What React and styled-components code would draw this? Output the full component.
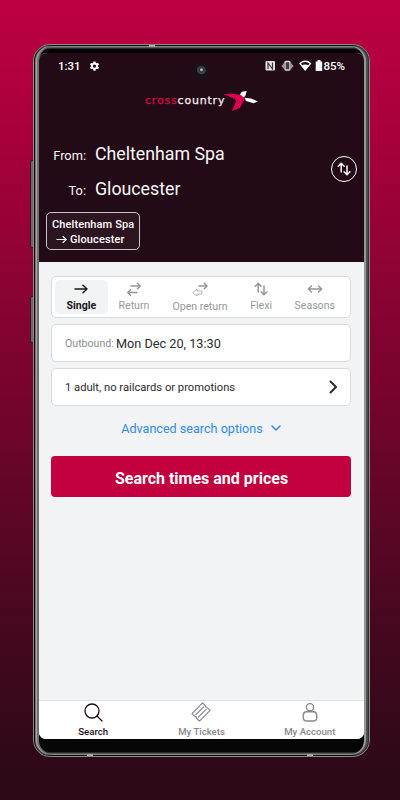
import React from "react";
import styled, { createGlobalStyle } from "styled-components";

const GlobalStyle = createGlobalStyle`
    * {
        box-sizing: border-box;
    }
    body {
        margin: 0;
        font-family: Roboto, sans-serif;
    }
`;

const Page = styled.div`
    width: 400px;
    height: 800px;
    padding: 44px 30px 0 33px;
    overflow: hidden;
    background: linear-gradient(#bd0041 0, #a8003d 17%, #75042d 50%, #43081f 80%, #290817 100%);
`;

const Phone = styled.div`
    position: relative;
    width: 337px;
    height: 713px;
    padding: 8px 6px 18px;
    border-radius: 17px;
    border: 1px solid #8b8a85;
    background: #050505;
    box-shadow: inset 0 0 0 1px #0c0c0c, inset 0 0 0 2px #858585, inset 0 0 0 3px #5a595a,
        inset 0 0 0 4px #2a292a;
`;

const Rails = styled.div`
    position: absolute;
    top: 1px;
    bottom: 1px;
    left: 0;
    right: 0;
    border-radius: 15px;
    box-shadow: inset 1px 0 #080808, inset 2px 0 #777476, inset 3px 0 #aaa6a8, inset 5px 0 #716d70,
        inset -1px 0 #303030, inset -2px 0 #4c4c4c, inset -3px 0 #555, inset -5px 0 #969696;
`;

const SideKey = styled.div`
    position: absolute;
    left: -4px;
    top: ${props => props.top}px;
    width: 3px;
    height: ${props => props.size}px;
    border: 1px solid #2c1b20;
    border-right: 0;
    border-radius: 2px 0 0 2px;
    background: #7c5f69;
`;

const Antenna = styled.div`
    position: absolute;
    left: ${props => props.left}px;
    ${props => (props.bottom ? "bottom: 0;" : "top: 0;")}
    width: 6px;
    height: 2px;
    background: #aaa;
`;

const Screen = styled.div`
    position: relative;
    display: flex;
    flex-direction: column;
    width: 325px;
    height: 686px;
    margin-left: -1px;
    border-radius: 7px;
    overflow: hidden;
    background: #f2f3f5;
`;

const Header = styled.header`
    height: 209px;
    background: #220b16;
    color: #fff;
`;

const StatusBar = styled.div`
    display: flex;
    align-items: center;
    height: 26px;
    padding: 0 19px 0 19px;
    font-size: 11.5px;
    font-weight: 500;

    svg {
        display: block;
    }
`;

const StatusIcons = styled.div`
    display: flex;
    align-items: center;
    margin-left: auto;
`;

const Camera = styled.div`
    position: absolute;
    left: 154px;
    top: 10px;
    width: 16px;
    height: 16px;
    border-radius: 50%;
    border: 3px solid #17131a;
    background: radial-gradient(circle at 55% 38%, #b8bac4 0 0.8px, #32323e 2px, #45454f 4px, #111 5px);
`;

const Brand = styled.div`
    display: flex;
    align-items: center;
    height: 30px;
    margin-top: 7px;
    padding-left: 106px;
`;

const BrandName = styled.div`
    width: 79px;
    white-space: nowrap;
    font: 11px/14px "DejaVu Sans", sans-serif;
    letter-spacing: 0.8px;
    color: #f5eef1;
    -webkit-text-stroke: 0.25px;

    span {
        color: #dc0049;
    }
`;

const Route = styled.div`
    display: flex;
    align-items: center;
    justify-content: space-between;
    height: 70px;
    margin-top: 20px;
    padding-right: 7px;
`;

const Stop = styled.div`
    display: grid;
    grid-template-columns: 47px 1fr;
    column-gap: 9px;
    align-items: baseline;
    height: 35px;
    line-height: 37px;
    font-size: 17.75px;
    color: #fbf8f9;
`;

const StopLabel = styled.span`
    text-align: right;
    font-size: 12.8px;
    line-height: 20px;
`;

const SwapButton = styled.button`
    display: flex;
    align-items: center;
    justify-content: center;
    width: 26px;
    height: 26px;
    padding: 0;
    margin-top: -4px;
    border: 1.5px solid #fff;
    border-radius: 50%;
    background: none;
    color: #fff;
`;

const Recent = styled.div`
    width: 94px;
    height: 38px;
    margin: 6px 0 0 7px;
    padding: 4px 5px;
    border: 1px solid #cbc5c8;
    border-radius: 5px;
    background: #2d1421;
    font-size: 11px;
    font-weight: 500;
    line-height: 15px;
    letter-spacing: 0.1px;
    white-space: nowrap;

    div {
        display: flex;
        align-items: center;
        gap: 3px;
        padding-left: 4px;
    }
`;

const Body = styled.main`
    flex: 1;
    padding: 14px 13px 0 12px;
`;

const Card = styled.div`
    display: flex;
    align-items: center;
    height: 38px;
    margin-bottom: 6px;
    padding: 0 13px;
    border: 1px solid #d9dadc;
    border-radius: 5px;
    background: #fff;
    font-size: ${props => props.size || 11.2}px;
    color: #2c2b2d;
`;

const TicketTypes = styled(Card)`
    height: 42px;
    padding: 3px;
`;

const TicketType = styled.div`
    display: flex;
    flex-direction: column;
    align-items: center;
    width: ${props => props.width}px;
    height: 34px;
    padding-top: 2px;
    border-radius: 5px;
    background: ${props => (props.active ? "#f2f3f5" : "none")};
    color: ${props => (props.active ? "#18171a" : "#96979a")};
    font-size: 10.6px;
    font-weight: ${props => (props.active ? 700 : 400)};
    line-height: 14px;
    white-space: nowrap;

    svg {
        margin-bottom: ${props => (props.low ? 4 : 3)}px;
    }
`;

const Muted = styled.span`
    width: 51px;
    font-size: 10.6px;
    color: #8b8c8f;
`;

const Advanced = styled.div`
    display: flex;
    align-items: center;
    justify-content: center;
    gap: 8px;
    height: 32px;
    font-size: 12.6px;
    color: #2f8be9;
`;

const SearchButton = styled.button`
    display: block;
    width: 100%;
    height: 41px;
    margin-top: 12px;
    padding: 3px 0 0 1px;
    border: 0;
    border-radius: 4px;
    background: #c3003e;
    color: #fff;
    font: 700 16px Roboto, sans-serif;
`;

const TabBar = styled.nav`
    display: grid;
    grid-template-columns: repeat(3, 1fr);
    height: 39px;
    border-top: 1px solid #dedfe1;
    background: #fff;
`;

const Tab = styled.div`
    display: flex;
    flex-direction: column;
    align-items: center;
    gap: 1px;
    padding-top: 1px;
    font-size: 9.6px;
    font-weight: 500;
    line-height: 18px;
    color: ${props => (props.active ? "#220b16" : "#87888c")};
`;

const Gap = styled.span`
    width: 8px;
`;

const Spacer = styled.span`
    flex: 1;
`;

const Icon = ({ width, height, box, stroke = 1.5, children }) => (
    <svg
        width={width}
        height={height}
        viewBox={box || `0 0 ${width} ${height}`}
        fill="none"
        stroke="currentColor"
        strokeWidth={stroke}
        strokeLinecap="round"
        strokeLinejoin="round"
    >
        {children}
    </svg>
);

const ArrowRight = ({ width = 14 }) => (
    <Icon width={width} height={width} box="0 0 14 14">
        <path d="M1 7h12M9 3.2 13 7l-4 3.8" />
    </Icon>
);

const UpDown = () => (
    <Icon width={14} height={14}>
        <path d="M4.2 10V1.5M1.3 4.2l2.9-2.9 2.9 2.9M10 4v8.5M7.1 9.8l2.9 2.9 2.9-2.9" />
    </Icon>
);

const ReturnArrows = () => (
    <Icon width={14} height={14}>
        <path d="M4 4h9M10.5 1.3l2.7 2.7-2.7 2.7M10 10.5H1M3.5 7.8.8 10.5l2.7 2.7" />
    </Icon>
);

const OpenReturnArrows = () => (
    <Icon width={16} height={14}>
        <path d="M7 4h8M12.3 1.2 15 4l-2.7 2.8" />
        <path strokeWidth="0.7" d="M1 10.5 5 7v2h5v3H5v2z" />
    </Icon>
);

const BothWays = () => (
    <Icon width={16} height={14}>
        <path d="M1.5 7h13M4.5 4 1.3 7l3.2 3M11.5 4l3.2 3-3.2 3" />
    </Icon>
);

const Gear = () => (
    <svg width="11" height="11" viewBox="0 0 24 24" fill="#fff" stroke="none">
        <path
            fillRule="evenodd"
            d="M9.8 1h4.4l.6 3 2 1.1 2.9-1 2.2 3.8-2.3 2v2.2l2.3 2-2.2 3.8-2.9-1-2 1.1-.6 3H9.8l-.6-3-2-1.1-2.9 1-2.2-3.8 2.3-2V9.9l-2.3-2 2.2-3.8 2.9 1 2-1.1zM12 7.5a3.5 3.5 0 1 0 0 7 3.5 3.5 0 0 0 0-7z"
        />
    </svg>
);

const PhoneStatus = () => (
    <StatusIcons>
        <svg width="58" height="12" viewBox="0 0 58 12">
            <rect x="0.5" y="1" width="9.5" height="9.5" rx="1" fill="#e7e1e4" />
            <path d="M3 9V3l4.5 6V2.5" stroke="#423239" strokeWidth="1.2" fill="none" />
            <rect x="20" y="1.5" width="5" height="8.5" rx="1" fill="#493b42" stroke="#ddd6da" strokeWidth="1.4" />
            <path d="M18.3 3.5v5M26.7 3.5v5M17.3 5v2M27.7 5v2" stroke="#b9b0b5" />
            <path d="M35 3.5c3-3 7.5-3 10.5 0L40.2 10z" fill="none" stroke="#fff" strokeWidth="1.3" />
            <path d="M36.5 5.5c2.5-1.5 5-1.5 7.5 0L40.2 10z" fill="#fff" />
            <path d="M52.5 0h3v1.5H57.200V11h-6.500V1.500h1.800z" fill="#fff" />
        </svg>
        85%
    </StatusIcons>
);

const BrandMark = () => (
    <svg width="34" height="20" viewBox="0 0 34 20">
        <path d="M0 3.300 6 2.500 16 3.800l5 3-5 10.200L8 20l4-9.500-1-2.500z" fill="#de004d" />
        <path d="M16 3.500 17.800.8 22.700 0l-1.500 5.200-1.700 1z" fill="#fff" />
        <path d="m20.500 6.800 6.500.6 7 3-4.500 1.800-7.500-2.200z" fill="#fff" />
    </svg>
);

const App = () => (
    <Page>
        <GlobalStyle />
        <Phone>
            <SideKey top={115} size={88} />
            <SideKey top={251} size={47} />
            <Rails />
            <Antenna left={115} />
            <Antenna left={53} bottom />
            <Antenna left={273} bottom />
            <Screen>
                <Header>
                    <StatusBar>
                        1:31
                        <Gap />
                        <Gear />
                        <PhoneStatus />
                    </StatusBar>
                    <Camera />
                    <Brand>
                        <BrandName>
                            <span>cross</span>country
                        </BrandName>
                        <BrandMark />
                    </Brand>
                    <Route>
                        <div>
                            <Stop>
                                <StopLabel>From:</StopLabel>
                                Cheltenham Spa
                            </Stop>
                            <Stop>
                                <StopLabel>To:</StopLabel>
                                Gloucester
                            </Stop>
                        </div>
                        <SwapButton>
                            <UpDown />
                        </SwapButton>
                    </Route>
                    <Recent>
                        Cheltenham Spa
                        <div>
                            <ArrowRight width={11} />
                            Gloucester
                        </div>
                    </Recent>
                </Header>
                <Body>
                    <TicketTypes>
                        <TicketType active width={53}>
                            <ArrowRight />
                            Single
                        </TicketType>
                        <TicketType width={53}>
                            <ReturnArrows />
                            Return
                        </TicketType>
                        <TicketType width={80} low>
                            <OpenReturnArrows />
                            Open return
                        </TicketType>
                        <TicketType width={43}>
                            <UpDown />
                            Flexi
                        </TicketType>
                        <TicketType width={65}>
                            <BothWays />
                            Seasons
                        </TicketType>
                    </TicketTypes>
                    <Card size={12.7}>
                        <Muted>Outbound:</Muted>
                        Mon Dec 20, 13:30
                    </Card>
                    <Card>
                        1 adult, no railcards or promotions
                        <Spacer />
                        <Icon width={8} height={14} stroke={2}>
                            <path d="m1.5 1.5 5.500 5.500-5.500 5.500" />
                        </Icon>
                    </Card>
                    <Advanced>
                        Advanced search options
                        <Icon width={10} height={6}>
                            <path d="m1 1 4 4 4-4" />
                        </Icon>
                    </Advanced>
                    <SearchButton>Search times and prices</SearchButton>
                </Body>
                <TabBar>
                    <Tab active>
                        <Icon width={20} height={20} stroke={1.3}>
                            <circle cx="9" cy="9" r="7" />
                            <path d="m14 14 5 5" />
                        </Icon>
                        Search
                    </Tab>
                    <Tab>
                        <Icon width={20} height={20} stroke={1.2}>
                            <g transform="rotate(-45 10 10)">
                                <path d="M2.5 4.700h15v4q-1 1.300 0 2.600v4h-15v-4q1-1.300 0-2.600zM4.500 8.300h11M4.500 11.700h11" />
                            </g>
                        </Icon>
                        My Tickets
                    </Tab>
                    <Tab>
                        <Icon width={20} height={20} stroke={1.4}>
                            <circle cx="10" cy="5.2" r="3.6" />
                            <path d="M6.5 9.8h7c2.2 0 3.3 2.2 3.3 4.7S16 19 14 19H6c-2 0-2.8-2-2.8-4.5s1.1-4.7 3.3-4.7z" />
                        </Icon>
                        My Account
                    </Tab>
                </TabBar>
            </Screen>
        </Phone>
    </Page>
);

export default App;
